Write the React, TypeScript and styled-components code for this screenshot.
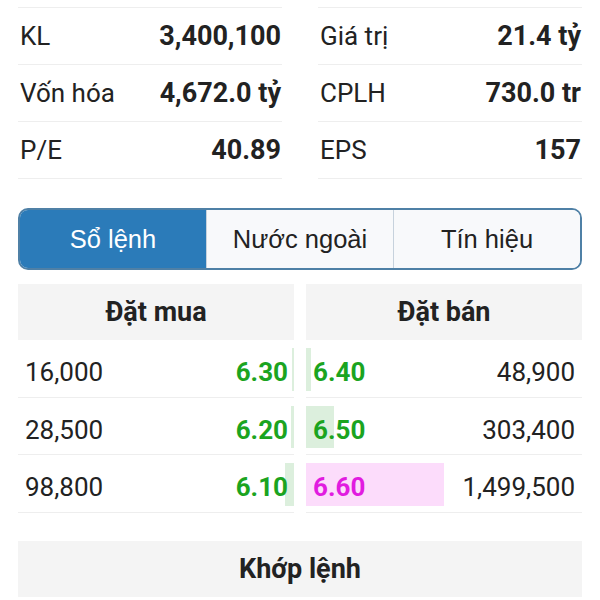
import styled, { createGlobalStyle } from 'styled-components'

const GlobalStyle = createGlobalStyle`
  html, body {
    margin: 0;
    padding: 0;
    background: #ffffff;
  }
  body {
    font-family: Roboto, 'Noto Sans', sans-serif;
    color: #222222;
  }
`

const Page = styled.div`
  width: 600px;
  height: 600px;
  overflow: hidden;
  padding: 7px 18px 0;
  box-sizing: border-box;
`

const StatsGrid = styled.div`
  display: grid;
  grid-template-columns: 1fr 1fr;
  column-gap: 36px;
`

const StatsColumn = styled.div`
  border-top: 1px solid #eeeeee;
`

const StatRow = styled.div`
  display: flex;
  align-items: center;
  justify-content: space-between;
  height: 56px;
  border-bottom: 1px solid #eeeeee;
  font-size: 26px;
  padding: 0 1px 0 2px;
`

const StatLabel = styled.span`
  color: #222222;
`

const StatValue = styled.span`
  font-size: 27px;
  font-weight: 700;
  color: #222222;
`

const Tabs = styled.div`
  display: flex;
  margin-top: 29px;
  height: 62px;
  border: 2px solid #4f80a6;
  border-radius: 10px;
  overflow: hidden;
  box-sizing: border-box;
`

const Tab = styled.div<{ $active?: boolean }>`
  flex: 1;
  display: flex;
  align-items: center;
  justify-content: center;
  font-family: 'Liberation Sans', Arial, sans-serif;
  font-size: 25.5px;
  color: ${(p) => (p.$active ? '#ffffff' : '#222222')};
  background: ${(p) => (p.$active ? '#2b7bb9' : '#f8f9fb')};
  & + & {
    border-left: 1px solid #c7d2dd;
  }
`

const Book = styled.div`
  display: grid;
  grid-template-columns: 1fr 1fr;
  column-gap: 12px;
  margin-top: 14px;
`

const Side = styled.div``

const HeaderCell = styled.div`
  display: flex;
  align-items: center;
  justify-content: center;
  height: 56px;
  background: #f4f4f4;
  font-size: 27px;
  font-weight: 700;
  color: #222222;
`

const BookRow = styled.div<{ $side: 'buy' | 'sell' }>`
  position: relative;
  display: flex;
  flex-direction: ${(p) => (p.$side === 'buy' ? 'row' : 'row-reverse')};
  align-items: center;
  justify-content: space-between;
  box-sizing: border-box;
  height: 57.5px;
  padding: ${(p) => (p.$side === 'buy' ? '8px 6px 0 7px' : '8px 7px 0 7px')};
  border-bottom: 1px solid #eeeeee;
  font-size: 26px;
`

const VolumeBar = styled.div<{ $side: 'buy' | 'sell'; $tone: 'green' | 'pink' }>`
  position: absolute;
  top: 8px;
  bottom: 6px;
  ${(p) => (p.$side === 'buy' ? 'right: 0;' : 'left: 0;')}
  background: ${(p) => (p.$tone === 'pink' ? '#fcdcfb' : '#dcefdd')};
`

const Volume = styled.span`
  position: relative;
  color: #222222;
`

const Price = styled.span<{ $tone: 'green' | 'pink' }>`
  position: relative;
  font-weight: 700;
  color: ${(p) => (p.$tone === 'pink' ? '#e11be0' : '#1ba41f')};
`

const MatchHeader = styled(HeaderCell)`
  margin-top: 28px;
`

type Level = { price: string; volume: number; tone: 'green' | 'pink' }

const bids: Level[] = [
  { price: '6.30', volume: 16000, tone: 'green' },
  { price: '6.20', volume: 28500, tone: 'green' },
  { price: '6.10', volume: 98800, tone: 'green' },
]

const asks: Level[] = [
  { price: '6.40', volume: 48900, tone: 'green' },
  { price: '6.50', volume: 303400, tone: 'green' },
  { price: '6.60', volume: 1499500, tone: 'pink' },
]

const maxVolume = Math.max(...bids.map((b) => b.volume), ...asks.map((a) => a.volume))

const fmt = (n: number) => n.toLocaleString('en-US')

const leftStats = [
  ['KL', '3,400,100'],
  ['Vốn hóa', '4,672.0 tỷ'],
  ['P/E', '40.89'],
]

const rightStats = [
  ['Giá trị', '21.4 tỷ'],
  ['CPLH', '730.0 tr'],
  ['EPS', '157'],
]

const OrderSide = ({ title, side, levels }: { title: string; side: 'buy' | 'sell'; levels: Level[] }) => (
  <Side>
    <HeaderCell>{title}</HeaderCell>
    {levels.map((l) => (
      <BookRow key={l.price} $side={side}>
        <VolumeBar
          $side={side}
          $tone={l.tone}
          style={{ width: `${Math.max(0.7, (l.volume / maxVolume) * 50)}%` }}
        />
        <Volume>{fmt(l.volume)}</Volume>
        <Price $tone={l.tone}>{l.price}</Price>
      </BookRow>
    ))}
  </Side>
)

export default function App() {
  return (
    <>
      <GlobalStyle />
      <Page>
        <StatsGrid>
          <StatsColumn>
            {leftStats.map(([label, value]) => (
              <StatRow key={label}>
                <StatLabel>{label}</StatLabel>
                <StatValue>{value}</StatValue>
              </StatRow>
            ))}
          </StatsColumn>
          <StatsColumn>
            {rightStats.map(([label, value]) => (
              <StatRow key={label}>
                <StatLabel>{label}</StatLabel>
                <StatValue>{value}</StatValue>
              </StatRow>
            ))}
          </StatsColumn>
        </StatsGrid>
        <Tabs>
          <Tab $active>Sổ lệnh</Tab>
          <Tab>Nước ngoài</Tab>
          <Tab>Tín hiệu</Tab>
        </Tabs>
        <Book>
          <OrderSide title="Đặt mua" side="buy" levels={bids} />
          <OrderSide title="Đặt bán" side="sell" levels={asks} />
        </Book>
        <MatchHeader>Khớp lệnh</MatchHeader>
      </Page>
    </>
  )
}
